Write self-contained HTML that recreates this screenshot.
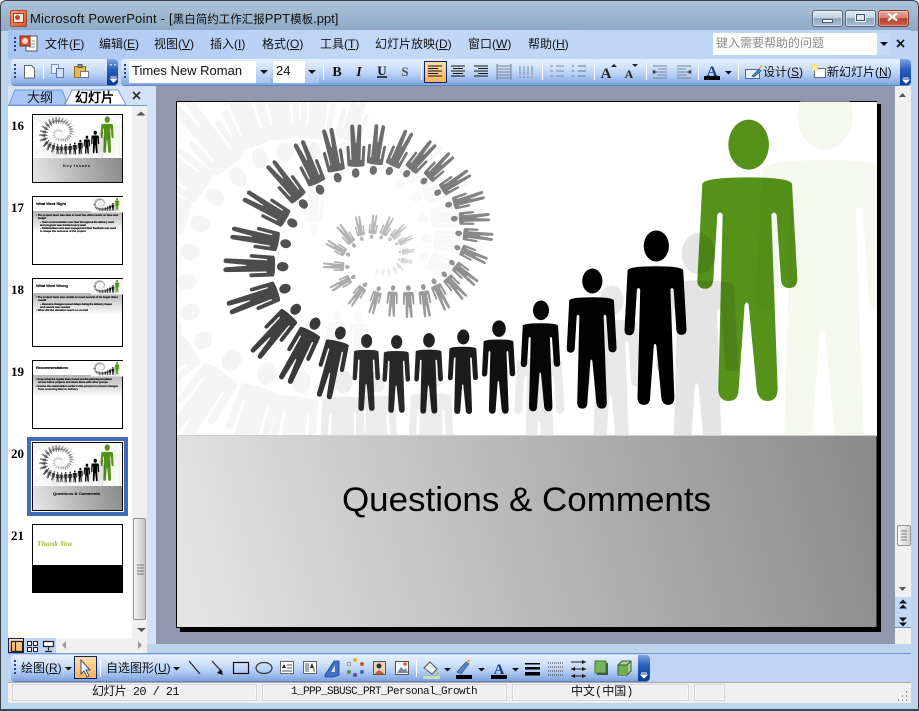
<!DOCTYPE html>
<html lang="zh"><head><meta charset="utf-8"><title>Microsoft PowerPoint</title>
<style>
html,body{margin:0;padding:0;background:#e8eef4}
#w{position:relative;width:919px;height:711px;overflow:hidden;background:#bcd5ec;border-radius:6px 6px 0 0;font:12px "Liberation Sans","WenQuanYi Zen Hei","Noto Sans CJK SC",sans-serif;color:#111}
.a{position:absolute}
.t{position:absolute;white-space:nowrap;line-height:14px}
.pill{position:absolute;border-radius:4px;background:linear-gradient(#e6f0fe 0,#d3e3fb 30%,#b6cff5 60%,#7fa3de 100%);box-shadow:0 1px 0 #5f86c4}
.cap{position:absolute;border-radius:0 4px 4px 0;background:linear-gradient(#7ea6e6,#2a5fbb 40%,#0c3a94)}
.cmb{position:absolute;background:#fff}
.arr{position:absolute;top:0;bottom:0;right:0;width:14px;background:linear-gradient(#e2ecfb,#a9c3ec)}
.pn{position:absolute;top:684px;height:15px;border:1px solid #d6d6d6;border-width:1px;box-shadow:inset 0 0 0 1px #f6f6f6}
.thumb{position:absolute;left:11px;font:bold 13px "Liberation Serif",serif;color:#000}
</style></head><body>
<div id="w">
<!-- window frame -->
<div class="a" style="left:0;top:0;width:919px;height:31px;background:linear-gradient(#adc5da,#8ea9c6);border-radius:6px 6px 0 0"></div>
<div class="a" style="left:0;top:0;width:917px;height:709px;border:1px solid #39424c;border-bottom:0;border-radius:6px 6px 0 0"></div>
<div class="a" style="left:0;top:709px;width:919px;height:2px;background:#25505e"></div>
<!-- PPT title icon -->
<div class="a" style="left:10px;top:10px;width:15px;height:15px;border-radius:2px;background:linear-gradient(135deg,#f7a77a,#d6552a);border:1px solid #a8482a"></div>
<div class="a" style="left:13px;top:13px;width:9px;height:8px;background:#fbe8dc;border:1px solid #a33"></div>
<div class="a" style="left:15px;top:15px;width:5px;height:5px;border-radius:50%;background:#c9452a"></div>
<div class="t" style="left:30px;top:12px;font-size:13px;letter-spacing:.2px;color:#0c0c0c">Microsoft PowerPoint - [<span style="font-size:11.5px;letter-spacing:0">黑白简约工作汇报</span><span style="letter-spacing:0">PPT</span><span style="font-size:11.5px;letter-spacing:0">模板</span><span style="letter-spacing:0">.ppt]</span></div>
<!-- caption buttons -->
<div class="a" style="left:812px;top:10px;width:29px;height:15px;border:1px solid #56677a;border-radius:3px;background:linear-gradient(#dbe6f0 0,#c4d3e2 45%,#8ea5bd 50%,#a9bfd4 100%);box-shadow:inset 0 0 0 1px rgba(255,255,255,.5)"></div>
<div class="a" style="left:845px;top:10px;width:29px;height:15px;border:1px solid #56677a;border-radius:3px;background:linear-gradient(#dbe6f0 0,#c4d3e2 45%,#8ea5bd 50%,#a9bfd4 100%);box-shadow:inset 0 0 0 1px rgba(255,255,255,.5)"></div>
<div class="a" style="left:878px;top:10px;width:29px;height:15px;border:1px solid #7c3b34;border-radius:3px;background:linear-gradient(#e9a89c 0,#d9806f 45%,#bb3f2e 50%,#c9604c 100%);box-shadow:inset 0 0 0 1px rgba(255,255,255,.35)"></div>
<div class="a" style="left:822px;top:19px;width:9px;height:2px;background:#f4f8fb;border:1px solid #4e5f72"></div>
<div class="a" style="left:856px;top:14px;width:7px;height:5px;background:#dfe8f1;border:1px solid #3d4e62;outline:1px solid #f0f5fa"></div>
<!-- menu bar -->
<div class="a" style="left:8px;top:30px;width:903px;height:29px;background:linear-gradient(90deg,#a9c5f2,#c3d8f8 40%,#bdd4f7)"></div>
<div class="t" style="left:45px;top:37px">文件(<u>F</u>)</div>
<div class="t" style="left:99px;top:37px">编辑(<u>E</u>)</div>
<div class="t" style="left:154px;top:37px">视图(<u>V</u>)</div>
<div class="t" style="left:210px;top:37px">插入(<u>I</u>)</div>
<div class="t" style="left:262px;top:37px">格式(<u>O</u>)</div>
<div class="t" style="left:320px;top:37px">工具(<u>T</u>)</div>
<div class="t" style="left:375px;top:37px">幻灯片放映(<u>D</u>)</div>
<div class="t" style="left:468px;top:37px">窗口(<u>W</u>)</div>
<div class="t" style="left:528px;top:37px">帮助(<u>H</u>)</div>
<div class="cmb" style="left:713px;top:33px;width:178px;height:22px"><div class="arr" style="background:#c6d9f7"></div></div>
<div class="t" style="left:716px;top:36px;color:#8d8d8d">键入需要帮助的问题</div>
<!-- toolbars row -->
<div class="a" style="left:8px;top:59px;width:903px;height:27px;background:#c0d5f6"></div>
<div class="pill" style="left:11px;top:59px;width:107px;height:26px"></div>
<div class="cap" style="left:107px;top:59px;width:11px;height:26px"></div>
<div class="pill" style="left:121px;top:59px;width:790px;height:26px"></div>
<div class="cap" style="left:900px;top:59px;width:11px;height:26px"></div>
<div class="cmb" style="left:129px;top:61px;width:141px;height:22px"><div class="arr"></div></div>
<div class="cmb" style="left:273px;top:61px;width:46px;height:22px"><div class="arr"></div></div>
<div class="t" style="left:132px;top:64px;font-size:13px">Times New Roman</div>
<div class="t" style="left:276px;top:64px;font-size:13px">24</div>
<div class="a" style="left:424px;top:61px;width:21px;height:20px;border:1px solid #0a246a;background:linear-gradient(#ffdfa8,#fdb35c)"></div>
<div class="t" style="left:763px;top:65px">设计(<u>S</u>)</div>
<div class="t" style="left:827px;top:65px">新幻灯片(<u>N</u>)</div>
<!-- panes -->
<div class="a" style="left:8px;top:86px;width:903px;height:558px;background:#d3e2f9"></div>
<div class="a" style="left:156px;top:86px;width:739px;height:558px;background:#9098af"></div>
<div class="a" style="left:8px;top:105px;width:124px;height:533px;background:#fff"></div>
<div class="a" style="left:132px;top:105px;width:15px;height:533px;background:#f0f0f0"></div>
<div class="a" style="left:8px;top:105px;width:139px;height:1px;background:#6f97d6"></div>
<div class="a" style="left:133px;top:518px;width:13px;height:102px;border:1px solid #8e9299;border-radius:2px;box-sizing:border-box;background:linear-gradient(90deg,#f4f4f4,#d8d8d8 60%,#c6c6c6)"></div>
<div class="a" style="left:895px;top:86px;width:16px;height:511px;background:#f0f0f0"></div>
<div class="a" style="left:897px;top:525px;width:14px;height:21px;box-sizing:border-box;border:1px solid #8e9299;border-radius:2px;background:linear-gradient(90deg,#f6f6f6,#d4d4d4)"></div>
<div class="a" style="left:895px;top:597px;width:16px;height:31px;background:#c3d8f8;border-bottom:1px solid #6f97d6;box-sizing:border-box"></div>
<div class="a" style="left:895px;top:628px;width:16px;height:16px;background:#f0f0f0"></div>
<!-- bottom of thumbs -->
<div class="a" style="left:8px;top:638px;width:48px;height:17px;background:#c0d5f6"></div>
<div class="a" style="left:56px;top:638px;width:91px;height:15px;background:#f0f0f0"></div>
<div class="a" style="left:8px;top:638px;width:14px;height:13px;border:1px solid #0a246a;background:linear-gradient(#ffdfa8,#fdb35c)"></div>
<!-- draw toolbar -->
<div class="a" style="left:8px;top:653px;width:903px;height:1px;background:#6f97d6"></div>
<div class="a" style="left:8px;top:654px;width:903px;height:28px;background:#c0d5f6"></div>
<div class="pill" style="left:11px;top:655px;width:639px;height:26px"></div>
<div class="cap" style="left:638px;top:655px;width:12px;height:26px"></div>
<div class="a" style="left:74px;top:656px;width:21px;height:21px;border:1px solid #0a246a;background:linear-gradient(#ffdfa8,#fdb35c)"></div>
<div class="t" style="left:21px;top:661px">绘图(<u>R</u>)</div>
<div class="t" style="left:106px;top:661px">自选图形(<u>U</u>)</div>
<!-- status bar -->
<div class="a" style="left:8px;top:682px;width:903px;height:21px;background:#f0f0f0;border-top:1px solid #a8a8a8;box-sizing:border-box"></div>
<div class="pn" style="left:12px;width:243px"></div>
<div class="pn" style="left:262px;width:243px"></div>
<div class="pn" style="left:512px;width:175px"></div>
<div class="pn" style="left:694px;width:29px"></div>
<div class="t" style="left:92px;top:685px;font-family:'Liberation Mono','WenQuanYi Zen Hei',monospace;font-size:12px;letter-spacing:-.6px">幻灯片 20 / 21</div>
<div class="t" style="left:291px;top:685px;font-family:'Liberation Mono',monospace;font-size:11px;letter-spacing:-.6px">1_PPP_SBUSC_PRT_Personal_Growth</div>
<div class="t" style="left:571px;top:685px;font-family:'Liberation Mono','WenQuanYi Zen Hei',monospace">中文(中国)</div>
<!-- thumbs numbers -->
<div class="thumb" style="top:118px">16</div>
<div class="thumb" style="top:200px">17</div>
<div class="thumb" style="top:282px">18</div>
<div class="thumb" style="top:364px">19</div>
<div class="thumb" style="top:446px">20</div>
<div class="thumb" style="top:528px">21</div>
<!-- slide text -->
<div class="a" style="left:180px;top:104px;width:701px;height:528px;background:#000"></div>

<svg class="a" style="left:0;top:0" width="919" height="711" viewBox="0 0 919 711">
<defs>
<path id="p" d="M-61,0A61,75 0 1,0 61,0A61,75 0 1,0 -61,0ZM-139,117Q-130,98 0,98Q120,98 130,117L146,402Q146,430 122,430Q100,430 97,407L84,210Q76,197 68,210L87,732Q87,769 57,769Q28,769 24,732L0,480Q-6,467 -12,480L-30,732Q-30,769 -60,769Q-91,769 -91,732L-78,210Q-86,197 -94,210L-106,407Q-110,432 -130,432Q-154,432 -154,407Z"/>
<clipPath id="ac"><rect x="21" y="20" width="2100" height="1002"/></clipPath>
<linearGradient id="gg" x1="0" y1=".535" x2="1" y2=".465"><stop offset="0" stop-color="#e4e4e4"/><stop offset="1" stop-color="#8c8c8c"/></linearGradient>
<linearGradient id="bd" x1="0" y1="0" x2="0" y2="1"><stop offset="0" stop-color="#b4b4b4"/><stop offset="1" stop-color="#fff"/></linearGradient>
<g id="art" clip-path="url(#ac)">
<rect x="21" y="20" width="2100" height="1002" fill="#fff"/>
<!-- outer spiral -->
<use href="#p" transform="translate(511,713) rotate(14.1) scale(.261)" fill="#333"/>
<use href="#p" transform="translate(435,685) rotate(27.5) scale(.254)" fill="#3a3a3a"/>
<use href="#p" transform="translate(377,642) rotate(41.5) scale(.239)" fill="#404040"/>
<use href="#p" transform="translate(345,580) rotate(70.6) scale(.234)" fill="#484848"/>
<use href="#p" transform="translate(338,514) rotate(91.3) scale(.231)" fill="#4c4c4c"/>
<use href="#p" transform="translate(347,445) rotate(101.4) scale(.217)" fill="#505050"/>
<use href="#p" transform="translate(367,383) rotate(120.3) scale(.214)" fill="#555"/>
<use href="#p" transform="translate(400,326) rotate(140.7) scale(.205)" fill="#5a5a5a"/>
<use href="#p" transform="translate(450,283) rotate(155.6) scale(.204)" fill="#606060"/>
<use href="#p" transform="translate(503,247) rotate(168) scale(.195)" fill="#646464"/>
<use href="#p" transform="translate(557,233) rotate(180) scale(.189)" fill="#696969"/>
<use href="#p" transform="translate(610,225) rotate(188.3) scale(.18)" fill="#6e6e6e"/>
<use href="#p" transform="translate(658,227) rotate(206.4) scale(.173)" fill="#737373"/>
<use href="#p" transform="translate(710,235) rotate(220.7) scale(.16)" fill="#787878"/>
<use href="#p" transform="translate(762,257) rotate(226.4) scale(.149)" fill="#7c7c7c"/>
<use href="#p" transform="translate(803,292) rotate(237.7) scale(.146)" fill="#808080"/>
<use href="#p" transform="translate(836,328) rotate(254.2) scale(.143)" fill="#848484"/>
<use href="#p" transform="translate(853,370) rotate(267.3) scale(.139)" fill="#888"/>
<use href="#p" transform="translate(866,414) rotate(276) scale(.136)" fill="#8a8a8a"/>
<use href="#p" transform="translate(862,457) rotate(294.4) scale(.126)" fill="#8e8e8e"/>
<use href="#p" transform="translate(846,502) rotate(-49.6) scale(.126)" fill="#929292"/>
<use href="#p" transform="translate(823,537) rotate(-41.1) scale(.122)" fill="#949494"/>
<use href="#p" transform="translate(792,558) rotate(-25.5) scale(.121)" fill="#989898"/>
<use href="#p" transform="translate(760,575) rotate(-8.2) scale(.118)" fill="#9a9a9a"/>
<use href="#p" transform="translate(715,578) rotate(-1.9) scale(.117)" fill="#9c9c9c"/>
<use href="#p" transform="translate(669,578) rotate(2.7) scale(.112)" fill="#a0a0a0"/>
<use href="#p" transform="translate(626,580) rotate(17) scale(.102)" fill="#a4a4a4"/>
<use href="#p" transform="translate(585,568) rotate(36) scale(.1)" fill="#a8a8a8"/>
<use href="#p" transform="translate(550,545) rotate(61) scale(.1)" fill="#acacac"/>
<use href="#p" transform="translate(532,515) rotate(93.9) scale(.096)" fill="#b0b0b0"/>
<use href="#p" transform="translate(534,478) rotate(120.7) scale(.097)" fill="#b2b2b2"/>
<use href="#p" transform="translate(552,450) rotate(141.9) scale(.099)" fill="#b4b4b4"/>
<use href="#p" transform="translate(575,430) rotate(169) scale(.09)" fill="#b6b6b6"/>
<use href="#p" transform="translate(605,424) rotate(188.5) scale(.088)" fill="#b8b8b8"/>
<use href="#p" transform="translate(634,426) rotate(207) scale(.089)" fill="#bcbcbc"/>
<use href="#p" transform="translate(660,432) rotate(227) scale(.08)" fill="#c0c0c0"/>
<use href="#p" transform="translate(680,445) rotate(247) scale(.068)" fill="#c6c6c6"/>
<use href="#p" transform="translate(690,470) rotate(264) scale(.059)" fill="#ccc"/>
<use href="#p" transform="translate(687,493) rotate(-80) scale(.054)" fill="#d4d4d4"/>
<use href="#p" transform="translate(680,505) rotate(-45) scale(.037)" fill="#dcdcdc"/>
<use href="#p" transform="translate(670,515) rotate(-30) scale(.03)" fill="#e2e2e2"/>
<use href="#p" transform="translate(655,520) rotate(-10) scale(.03)" fill="#e6e6e6"/>
<use href="#p" transform="translate(640,520) rotate(0) scale(.03)" fill="#e8e8e8"/>
<use href="#p" transform="translate(622,520) rotate(10) scale(.028)" fill="#ececec"/>
<!-- standing -->
<use href="#p" transform="translate(590,737) scale(.273)" fill="#2c2c2c"/>
<use href="#p" transform="translate(680,740) scale(.276)" fill="#282828"/>
<use href="#p" transform="translate(777,735) scale(.286)" fill="#222"/>
<use href="#p" transform="translate(880,725) scale(.3)" fill="#1c1c1c"/>
<use href="#p" transform="translate(987,700) scale(.332)" fill="#111"/>
<use href="#p" transform="translate(1113,645) scale(.394)" fill="#060606"/>
<use href="#p" transform="translate(1267,557) scale(.498)" fill="#030303"/>
<use href="#p" transform="translate(1459,452) scale(.62)" fill="#000"/>
<use href="#p" transform="translate(1736,148)" fill="#55921a"/>
<!-- ghosts -->
<g style="mix-blend-mode:multiply" fill="#f5f5f5">
<use href="#p" transform="translate(270,190) rotate(160) scale(.4)"/>
<use href="#p" transform="translate(345,170) rotate(172) scale(.4)"/>
<use href="#p" transform="translate(430,165) rotate(186) scale(.34)"/>
<use href="#p" transform="translate(520,160) rotate(198) scale(.28)"/>
<use href="#p" transform="translate(205,245) rotate(142) scale(.4)"/>
<use href="#p" transform="translate(135,305) rotate(125) scale(.4)"/>
<use href="#p" transform="translate(90,385) rotate(108) scale(.4)"/>
<use href="#p" transform="translate(60,470) rotate(95) scale(.4)"/>
<use href="#p" transform="translate(50,560) rotate(85) scale(.4)"/>
<use href="#p" transform="translate(60,650) rotate(70) scale(.4)"/>
<use href="#p" transform="translate(100,735) rotate(55) scale(.4)"/>
<use href="#p" transform="translate(185,795) rotate(35) scale(.45)"/>
<use href="#p" transform="translate(290,835) rotate(18) scale(.45)"/>
<use href="#p" transform="translate(395,860) rotate(8) scale(.45)"/>
<use href="#p" transform="translate(430,400) rotate(180) scale(.2)" fill="#f8f8f8"/>
<use href="#p" transform="translate(690,265) rotate(225) scale(.22)" fill="#f8f8f8"/>
<use href="#p" transform="translate(740,305) rotate(250) scale(.22)" fill="#f8f8f8"/>
<use href="#p" transform="translate(760,370) rotate(265) scale(.22)" fill="#f8f8f8"/>
<use href="#p" transform="translate(770,430) rotate(275) scale(.22)" fill="#f8f8f8"/>
<use href="#p" transform="translate(760,485) rotate(295) scale(.2)" fill="#f8f8f8"/>
<use href="#p" transform="translate(500,660) rotate(0) scale(.2)" fill="#f8f8f8"/>
<use href="#p" transform="translate(565,665) rotate(0) scale(.2)" fill="#f8f8f8"/>
</g>
<g style="mix-blend-mode:multiply" fill="#ececec">
<use href="#p" transform="translate(520,860) scale(.45)"/>
<use href="#p" transform="translate(620,860) scale(.42)"/>
<use href="#p" transform="translate(785,850) scale(.45)"/>
<use href="#p" transform="translate(1110,740) scale(.5)" fill="#eaeaea"/>
</g>
<g style="mix-blend-mode:multiply">
<use href="#p" transform="translate(1325,615) scale(.6)" fill="#e8e8e8"/>
</g>
<g style="mix-blend-mode:multiply">
<use href="#p" transform="translate(1585,475) scale(.82)" fill="#e4e4e4"/>
</g>
<g style="mix-blend-mode:multiply">
<use href="#p" transform="translate(1965,62) scale(1.35)" fill="#f5f8ee"/>
</g>
</g>
</defs>

<!-- main slide -->
<rect x="176.500" y="101.500" width="700" height="526" fill="#fff" stroke="#000"/>
<use href="#art" transform="translate(170,95.330) scale(.33333)"/>
<rect x="177" y="436" width="699.500" height="191" fill="url(#gg)"/>
<rect x="177" y="435" width="699.500" height="1" fill="#cfcfcf"/>
<text x="342" y="511" font-family="Liberation Sans,sans-serif" font-size="34" textLength="369" lengthAdjust="spacingAndGlyphs" fill="#000">Questions &amp; Comments</text>

<!-- thumb 16 -->
<use href="#art" transform="translate(32.090,113.130) scale(.0433)"/>
<rect x="33" y="158" width="89" height="24.500" fill="url(#gg)"/>
<rect x="32.500" y="114.500" width="90" height="68" fill="none" stroke="#000"/>
<text x="63" y="167" font-family="Liberation Sans,sans-serif" font-size="4" font-weight="bold" fill="#000" textLength="27">Key Issues</text>

<!-- thumb 17 -->
<rect x="32.500" y="196.500" width="90" height="68" fill="#fff" stroke="#000"/>
<rect x="33" y="211" width="89" height="22" fill="url(#bd)"/>
<use href="#art" transform="translate(90.700,196.700) scale(.0152)"/>
<g font-family="Liberation Sans,sans-serif" font-weight="bold" fill="#000" stroke="#000" stroke-width=".12">
<text x="36" y="205" font-size="4" textLength="30">What Went Right</text>
<text x="36" y="216" font-size="2.800" textLength="82">• The project team was able to meet the client needs on time and</text>
<text x="38" y="219" font-size="2.800" textLength="8">budget</text>
<text x="40" y="223" font-size="2.800" textLength="74">– Team communication was clear throughout the delivery work</text>
<text x="40" y="226" font-size="2.800" textLength="46">and progress was tracked every week</text>
<text x="40" y="229" font-size="2.800" textLength="76">– Stakeholders were kept engaged and their feedback was used</text>
<text x="40" y="232" font-size="2.800" textLength="46">to shape the outcome of the project</text>
</g>

<!-- thumb 18 -->
<rect x="32.500" y="278.500" width="90" height="68" fill="#fff" stroke="#000"/>
<rect x="33" y="293" width="89" height="22" fill="url(#bd)"/>
<use href="#art" transform="translate(90.700,278.700) scale(.0152)"/>
<g font-family="Liberation Sans,sans-serif" font-weight="bold" fill="#000" stroke="#000" stroke-width=".12">
<text x="36" y="287" font-size="4" textLength="32">What Went Wrong</text>
<text x="36" y="298" font-size="2.800" textLength="82">• The project team was unable to meet several of its target dates</text>
<text x="38" y="301" font-size="2.800" textLength="8">overall</text>
<text x="40" y="305" font-size="2.800" textLength="72">– Resource changes caused delays during the delivery phases</text>
<text x="40" y="308" font-size="2.800" textLength="30">and rework was needed</text>
<text x="36" y="311" font-size="2.800" textLength="52">• What did the situation teach us overall</text>
</g>

<!-- thumb 19 -->
<rect x="32.500" y="360.500" width="90" height="68" fill="#fff" stroke="#000"/>
<rect x="33" y="375" width="89" height="22" fill="url(#bd)"/>
<use href="#art" transform="translate(90.700,360.700) scale(.0152)"/>
<g font-family="Liberation Sans,sans-serif" font-weight="bold" fill="#000" stroke="#000" stroke-width=".12">
<text x="36" y="369" font-size="4" textLength="32">Recommendations</text>
<text x="36" y="380" font-size="2.800" textLength="76">• Keep using the regular team review and the planning templates</text>
<text x="38" y="383" font-size="2.800" textLength="70">across future projects and share these with other groups</text>
<text x="36" y="387" font-size="2.800" textLength="82">• Involve the stakeholders earlier in the process to prevent changes</text>
<text x="38" y="390" font-size="2.800" textLength="40">from occurring later in delivery</text>
</g>

<!-- thumb 20 selected -->
<rect x="29" y="439" width="97" height="75" fill="#fff" stroke="#3f6cb9" stroke-width="4"/>
<use href="#art" transform="translate(32.090,441.130) scale(.0433)"/>
<rect x="33" y="486" width="89" height="24.500" fill="url(#gg)"/>
<rect x="32.500" y="442.500" width="90" height="68" fill="none" stroke="#000"/>
<text x="53" y="495" font-family="Liberation Sans,sans-serif" font-size="4" font-weight="bold" fill="#000" stroke="#000" stroke-width=".1" textLength="47">Questions &amp; Comments</text>

<!-- thumb 21 -->
<rect x="32.500" y="524.500" width="90" height="68" fill="#fff" stroke="#000"/>
<rect x="32" y="565" width="91" height="28" fill="#000"/>
<text x="37" y="546" font-family="Liberation Serif,serif" font-size="7.500" font-style="italic" font-weight="bold" fill="#9bbd22" textLength="35">Thank You</text>

<!-- tabs -->
<path d="M9,105L15,90H62L66,100L64,105Z" fill="#a9c5f5" stroke="#6f97d6"/>
<path d="M65,105L72,90H118L126,105Z" fill="#fff" stroke="#6f97d6"/>
<text x="27" y="102" font-family="Liberation Sans,WenQuanYi Zen Hei,sans-serif" font-size="13" fill="#111">大纲</text>
<text x="75" y="102" font-family="Liberation Sans,WenQuanYi Zen Hei,sans-serif" font-size="13" font-weight="bold" fill="#000">幻灯片</text>
<path d="M133,92L140,99M140,92L133,99" stroke="#333" stroke-width="1.800"/>
<!-- caption close X -->
<path d="M888,13.500l9,7M897,13.500l-9,7" stroke="#fff" stroke-width="2.200"/>
<!-- scroll arrows -->
<path d="M137,115h9l-4.500,-4z" transform="translate(-.5,.5)" fill="#555"/>
<path d="M137,628h9l-4.500,4z" fill="#555"/>
<path d="M899,97h7l-3.500,-4z" fill="#555"/>
<path d="M899,587h7l-3.500,4z" fill="#555"/>
<path d="M137,565h7M137,568h7M137,571h7M137,574h7" stroke="#777"/>
<path d="M901,531h6M901,534h6M901,537h6M901,540h6" stroke="#777"/>
<path d="M899,604l4,-4l4,4zM899,609l4,-4l4,4zM899,618l4,4l4,-4zM899,623l4,4l4,-4z" transform="translate(0,-.5)" fill="#111"/>
<path d="M67,638l-4,4l4,4zM139,638l4,4l-4,4z" transform="translate(-1,3)" fill="#9a9a9a"/>
<!-- view buttons -->
<path d="M11.500,641.500h11v10h-11zM15.500,641.500v10" fill="none" stroke="#222" stroke-width="1.200"/>
<path d="M27.500,641.500h4v4h-4zM33.500,641.500h4v4h-4zM27.500,647.500h4v4h-4zM33.500,647.500h4v4h-4z" fill="#fff" stroke="#222"/>
<path d="M43.500,641.500h10v5h-10zM48.500,646.500v4M45,651.500h7" fill="#fff" stroke="#222" stroke-width="1.200"/>
<!-- grips -->
<g fill="#27487e">
<rect x="14" y="37" width="2" height="2"/><rect x="14" y="41" width="2" height="2"/><rect x="14" y="45" width="2" height="2"/><rect x="14" y="49" width="2" height="2"/>
<rect x="14" y="64" width="2" height="2"/><rect x="14" y="68" width="2" height="2"/><rect x="14" y="72" width="2" height="2"/><rect x="14" y="76" width="2" height="2"/>
<rect x="124" y="64" width="2" height="2"/><rect x="124" y="68" width="2" height="2"/><rect x="124" y="72" width="2" height="2"/><rect x="124" y="76" width="2" height="2"/>
<rect x="14" y="660" width="2" height="2"/><rect x="14" y="664" width="2" height="2"/><rect x="14" y="668" width="2" height="2"/><rect x="14" y="672" width="2" height="2"/>
</g>
<!-- menu doc icon -->
<rect x="26" y="36" width="11" height="15" fill="#fff" stroke="#555"/>
<rect x="20" y="36" width="10" height="10" fill="#d9502a" stroke="#7a2a18"/>
<circle cx="25" cy="41" r="3" fill="#f7d8c8"/>
<path d="M29,47h6M29,44h6M32,41h3" stroke="#7a8aa5"/>
<!-- help close & arrow -->
<path d="M880,42h8l-4,4z" fill="#111"/>
<path d="M897,40l7,7M904,40l-7,7" stroke="#111" stroke-width="1.800"/>
<!-- combos arrows -->
<path d="M260,70h8l-4,4z" fill="#111"/>
<path d="M308,70h8l-4,4z" fill="#111"/>
<!-- standard toolbar icons -->
<path d="M24.500,65.500h7l3,3v9.500h-10z" fill="#fff" stroke="#666"/>
<path d="M43.500,63v16" stroke="#fff"/>
<path d="M51.500,64.500h7v9h-7z" fill="#e8eefa" stroke="#7f93b8"/><path d="M56.500,68.500h7v9h-7z" fill="#d2e0f8" stroke="#5976ab"/>
<path d="M74.500,66.500h11v11h-11z" fill="#e6b94a" stroke="#8a6a1e"/><path d="M78,64.500h4v3h-4z" fill="#999" stroke="#555"/><path d="M80.500,71.500h8v6h-8z" fill="#fff" stroke="#777"/>
<path d="M110,64h2l-1,2zM114,64h2l-1,2z" fill="#fff"/>
<path d="M110.500,77h6M110.500,79l3,3l3,-3z" fill="#fff" stroke="#fff"/>
<path d="M903,78h6M903,80l3,3l3,-3z" fill="#fff" stroke="#fff"/>
<path d="M641,673h6M641,675l3,3l3,-3z" fill="#fff" stroke="#fff"/>
<g font-family="Liberation Serif,serif" font-weight="bold" fill="#111" font-size="14" text-anchor="middle">
<text x="337" y="76">B</text>
<text x="359" y="76" font-style="italic">I</text>
<text x="382" y="75" font-size="13">U</text>
<text x="405" y="76" font-size="13" fill="#555">S</text>
</g>
<path d="M377,77h10" stroke="#111" stroke-width="1.500"/>
<path d="M323.500,63v17M421.500,63v17M542.500,63v17M594.500,63v17M646.500,63v17M698.500,63v17M738.500,63v17M100.500,659v18M416.500,659v18" stroke="#fff"/>
<!-- align icons -->
<path d="M428,66h14M428,68.500h10M428,71h14M428,73.500h10M428,76h14" stroke="#111"/>
<path d="M451,66h14M453,68.500h10M451,71h14M453,73.500h10M451,76h14" stroke="#111"/>
<path d="M474,66h14M478,68.500h10M474,71h14M478,73.500h10M474,76h14" stroke="#111"/>
<path d="M497,66h14M497,69h14M497,72h14M497,75h14M497,78h14M497,64v16M511,64v16" stroke="#7a8696"/>
<path d="M520,66v12M524,66v12M528,66v12M532,66v12" stroke="#7a8696" stroke-dasharray="9 1"/>
<path d="M550,66h3M556,66h8M550,71h3M556,71h8M550,76h3M556,76h8" stroke="#7a8696"/>
<path d="M572,66h2M578,66h8M572,71h2M578,71h8M572,76h2M578,76h8" stroke="#7a8696" stroke-width="1.200"/>
<text x="606" y="78" font-family="Liberation Serif,serif" font-weight="bold" font-size="15" text-anchor="middle" fill="#222">A</text>
<text x="629" y="78" font-family="Liberation Serif,serif" font-weight="bold" font-size="12" text-anchor="middle" fill="#222">A</text>
<path d="M611,67h6l-3,-3zM632,64h6l-3,3z" fill="#222"/>
<path d="M653,66h14M658,69h9M658,72h9M658,75h9M653,78h14M657,72l-4,-2v4z" stroke="#7a8696"/>
<path d="M677,66h14M677,69h9M677,72h9M677,75h9M677,78h14M687,72l4,-2v4z" stroke="#7a8696"/>
<text x="712" y="76" font-family="Liberation Serif,serif" font-weight="bold" font-size="15" text-anchor="middle" fill="#1d3c86">A</text>
<rect x="704" y="76" width="16" height="4" fill="#000"/>
<path d="M725,71h7l-3.500,3.500z" fill="#111"/>
<!-- design icon -->
<path d="M745.500,69.500h14v9h-14z" fill="#e9f0fb" stroke="#516a93"/><path d="M752,76l7,-7l2,2l-7,6z" fill="#5b83c8" stroke="#2b4878" stroke-width=".6"/><path d="M759,69l3,-4" stroke="#e5b73a" stroke-width="1.500"/>
<!-- new slide icon -->
<rect x="814.500" y="68.500" width="11" height="9" fill="#fff" stroke="#5e6e88"/>
<path d="M811,64h7v7h-7z" fill="#f7dc6d"/><path d="M812,65l5,5M817,65l-5,5" stroke="#fff7c2"/>
<!-- draw toolbar icons -->
<path d="M65,667h7l-3.500,3.500z" fill="#111"/>
<path d="M173,667h7l-3.500,3.500z" fill="#111"/>
<path d="M81,660v14l3,-3l3,6l2,-1l-3,-6h4z" fill="#fff" stroke="#3a4f78"/>
<path d="M189,661l11,13" stroke="#222" stroke-width="1.200"/>
<path d="M212,661l10,11" stroke="#222" stroke-width="1.200"/><path d="M223,675l-6,-2l4,-4z" fill="#111"/>
<rect x="233.500" y="662.500" width="15" height="11" fill="none" stroke="#111" stroke-width="1.200"/>
<ellipse cx="264" cy="668" rx="8" ry="5.500" fill="none" stroke="#333" stroke-width="1.200"/>
<rect x="280.500" y="661.500" width="13" height="12" fill="#fff" stroke="#666"/><path d="M287,665h5M287,668h5M282,671h10" stroke="#555"/><path d="M282,668l2,-4l2,4z" fill="#224"/>
<rect x="303.500" y="661.500" width="13" height="12" fill="#fff" stroke="#666"/><path d="M306,663v9M308,663v9M314,668v4" stroke="#555"/><path d="M310,668l2,-5l2,5z" fill="#224"/>
<path d="M325,675l9,-14h5v14l-5,2h-9z" fill="#3f70c8" stroke="#20437f" stroke-width=".8"/><path d="M331,672l4,-7v7z" fill="#d3e3fb"/>
<circle cx="355" cy="660" r="2" fill="#d8b33b"/><circle cx="362" cy="664" r="2" fill="#c8502a"/><circle cx="362" cy="672" r="2" fill="#3a62b8"/><circle cx="355" cy="675" r="2" fill="#6a4aa0"/><circle cx="349" cy="672" r="2" fill="#4f9a35"/><circle cx="349" cy="664" r="2" fill="#ddd" stroke="#555" stroke-width=".5"/>
<rect x="373.500" y="661.500" width="12" height="13" fill="#e8d4b4" stroke="#555"/><circle cx="379" cy="666" r="2.500" fill="#333"/><path d="M375,674q4,-7 9,0z" fill="#c85a2a"/>
<rect x="395.500" y="661.500" width="13" height="13" fill="#f3f6fb" stroke="#555"/><path d="M397,673l4,-6l3,3l2,-2l2,5z" fill="#7a8696"/><circle cx="405" cy="664" r="1.800" fill="#d8612a"/>
<path d="M424,668l6,-6l7,7l-5,5z" fill="#eef3fb" stroke="#555"/><path d="M437,670q3,3 1,5q-2,-2 -1,-5z" fill="#e2b030"/><rect x="423" y="676" width="17" height="3" fill="#c7ddb0"/>
<path d="M444,668h7l-3.500,3.500z" fill="#111"/>
<path d="M457,672l9,-10l3,2l-8,10z" fill="#5b83c8" stroke="#2b4878" stroke-width=".6"/><rect x="456" y="675" width="16" height="4" fill="#000"/><path d="M467,662l3,-2" stroke="#e2b030" stroke-width="2"/>
<path d="M478,668h7l-3.500,3.500z" fill="#111"/>
<text x="499" y="674" font-family="Liberation Serif,serif" font-weight="bold" font-size="15" text-anchor="middle" fill="#1d3c86">A</text><rect x="491" y="675" width="16" height="4" fill="#000"/>
<path d="M512,668h7l-3.500,3.500z" fill="#111"/>
<path d="M525,663h15v1.500h-15zM525,667h15v2.500h-15zM525,672h15v3.500h-15z" fill="#000"/>
<path d="M548,663h15M548,667h15M548,671h15M548,675h15" stroke="#333" stroke-dasharray="1 1"/>
<path d="M571,662h15M571,669h15M571,676h15" stroke="#222" stroke-width="1"/><path d="M586,662l-4,-2v4zM571,669l4,-2v4zM586,669l-4,-2v4zM571,676l4,-2v4zM586,676l-4,-2v4z" fill="#111"/>
<rect x="597" y="663" width="11" height="12" fill="#222" opacity=".75"/><rect x="595" y="661" width="11" height="12" fill="#74b55a" stroke="#3d7a2c"/>
<path d="M618,665l4,-4h9v10l-4,4h-9z" fill="#a9d490" stroke="#3d5a32"/><path d="M618,665h9v10M627,665l4,-4" fill="none" stroke="#3d5a32"/><rect x="618.500" y="665.500" width="8.500" height="9.500" fill="#6fae52"/>
<!-- size grip -->
<path d="M906,700h1M902,700h1M898,700h1M906,696h1M902,696h1M906,692h1" stroke="#999" stroke-width="2"/>
</svg>
</div>
</body></html>
